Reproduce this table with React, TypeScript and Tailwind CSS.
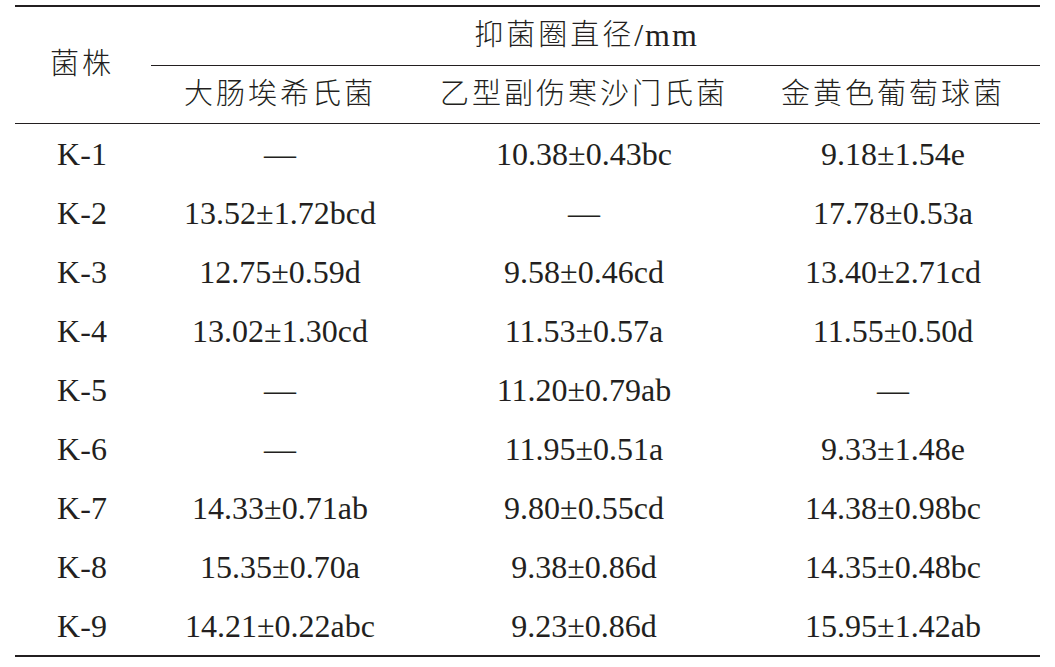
const rows: [string, string, string, string][] = [
  ["K-1", "—", "10.38±0.43bc", "9.18±1.54e"],
  ["K-2", "13.52±1.72bcd", "—", "17.78±0.53a"],
  ["K-3", "12.75±0.59d", "9.58±0.46cd", "13.40±2.71cd"],
  ["K-4", "13.02±1.30cd", "11.53±0.57a", "11.55±0.50d"],
  ["K-5", "—", "11.20±0.79ab", "—"],
  ["K-6", "—", "11.95±0.51a", "9.33±1.48e"],
  ["K-7", "14.33±0.71ab", "9.80±0.55cd", "14.38±0.98bc"],
  ["K-8", "15.35±0.70a", "9.38±0.86d", "14.35±0.48bc"],
  ["K-9", "14.21±0.22abc", "9.23±0.86d", "15.95±1.42ab"],
]

const cjk = "font-['Liberation_Serif','Noto_Sans_CJK_SC',serif] font-light text-[29px] tracking-[3px] leading-none"

const App = () => {
  return (
    <div className="w-[1055px] h-[667px] bg-white text-[#231f20] font-['Liberation_Serif','Noto_Sans_CJK_SC',serif] overflow-hidden">
      <div className="ml-[15px] w-[1025px] pt-[5px]">
        <div className="h-[2px] bg-[#231f20]" />

        {/* header */}
        <div className="flex">
          <div className={`w-[136px] flex items-center justify-center pr-[2px] pb-[2px] ${cjk}`}>菌株</div>
          <div className="flex-1 flex flex-col">
            <div className={`h-[58px] flex items-center justify-center pb-[2px] pr-[18px] ${cjk}`}>
              抑菌圈直径<span className="text-[32px] font-normal tracking-[2px]">/mm</span>
            </div>
            <div className="h-px bg-[#231f20]" />
            <div className="h-[57px] grid grid-cols-[258px_350px_281px] items-center">
              <div className={`text-center ${cjk}`}>大肠埃希氏菌</div>
              <div className={`text-center ${cjk}`}>乙型副伤寒沙门氏菌</div>
              <div className={`text-center pr-[13px] ${cjk}`}>金黄色葡萄球菌</div>
            </div>
          </div>
        </div>
        <div className="h-px bg-[#231f20]" />

        {/* body */}
        {rows.map((r) => (
          <div key={r[0]} className="h-[59px] grid grid-cols-[136px_258px_350px_281px] items-center text-[32px] leading-none">
            <div className="text-center pr-[2px]">{r[0]}</div>
            <div className="text-center">{r[1]}</div>
            <div className="text-center">{r[2]}</div>
            <div className="text-center pr-[13px]">{r[3]}</div>
          </div>
        ))}
        <div className="h-[2px] bg-[#231f20]" />
      </div>
    </div>
  )
}

export default App
